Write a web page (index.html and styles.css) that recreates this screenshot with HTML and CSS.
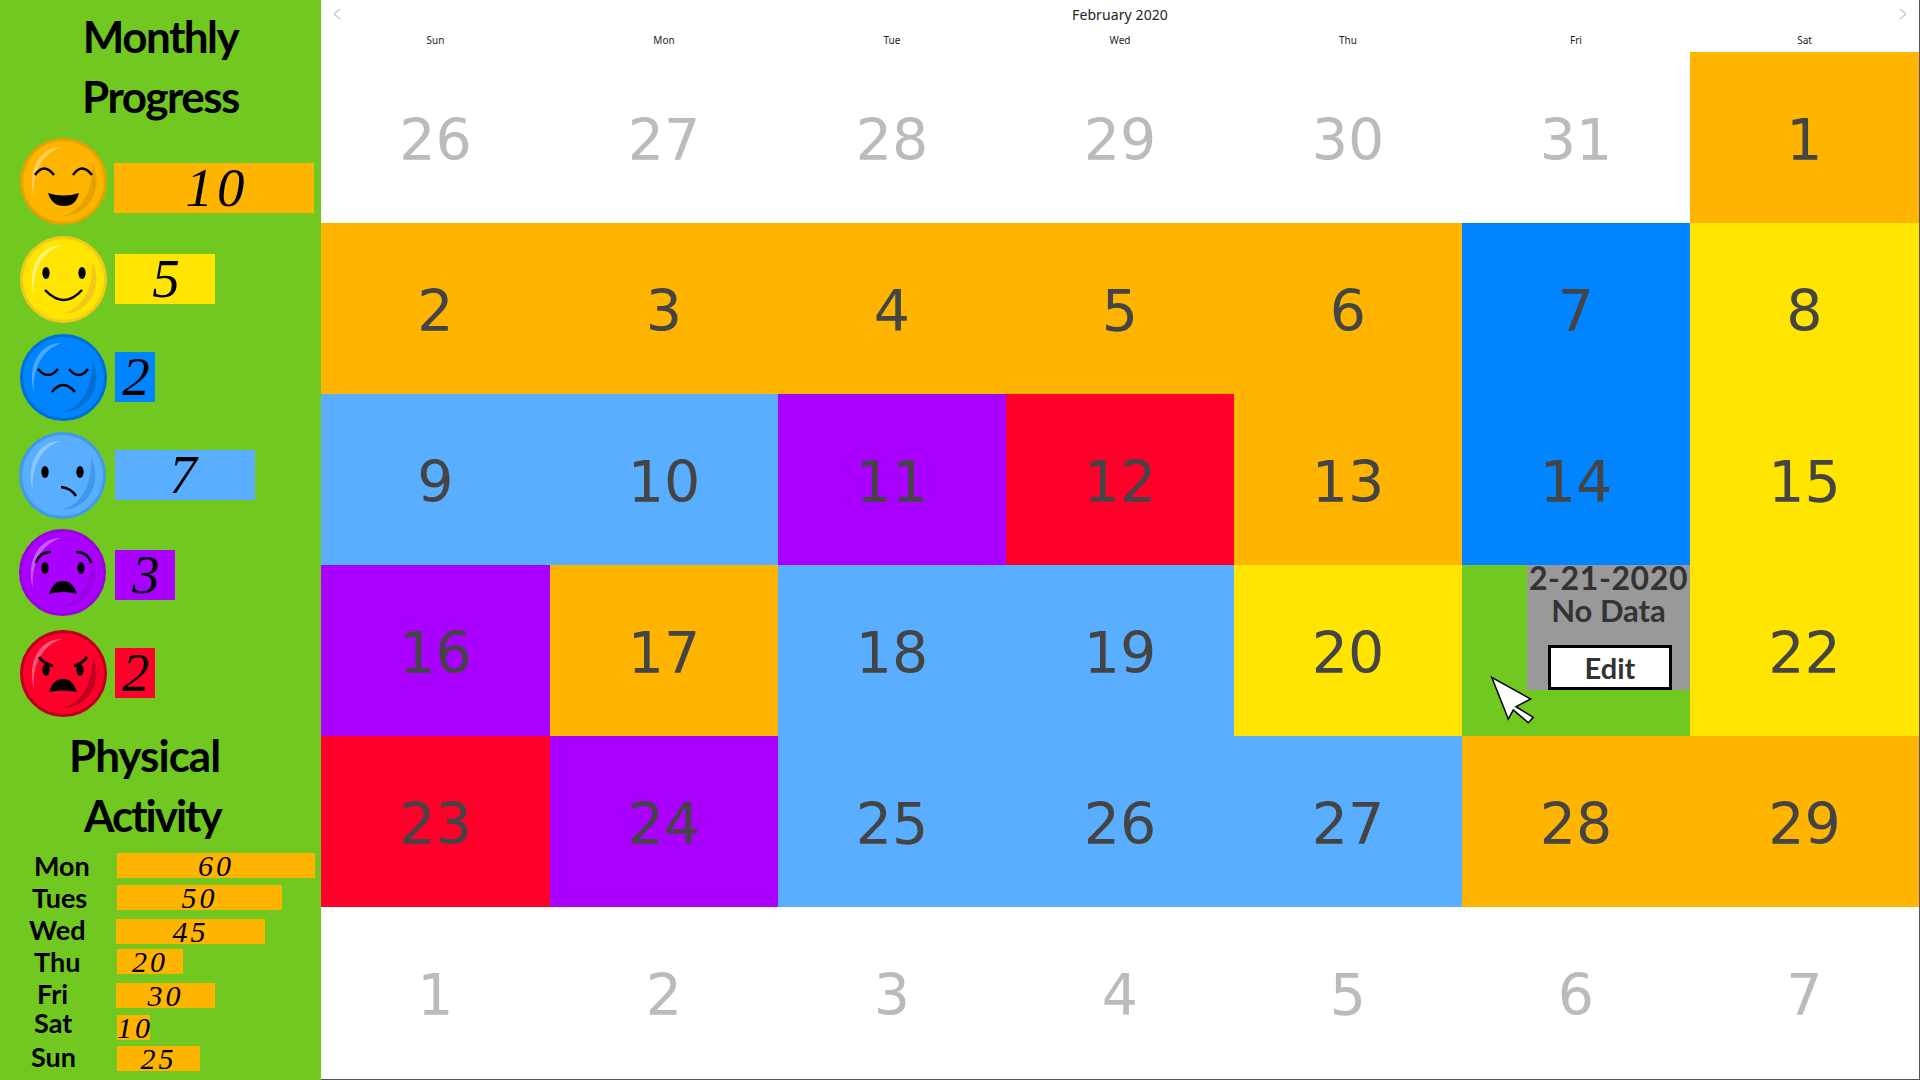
FILE: index.html
```html
<!DOCTYPE html>
<html>
<head>
  <title>Monthly Progress</title>
  <link rel="stylesheet" href="styles.css">
</head>
<body>
<div class="app">
  <aside class="sidebar">
    <h2 class="title title-monthly">Monthly<br>Progress</h2>

    <div class="mood-list">
      <div class="mood-row row-1">
        <svg class="face" viewBox="0 0 87 87">
          <circle cx="43.5" cy="43.5" r="42" fill="#ffb400" stroke="#e6a200" stroke-width="3"/>
          <path d="M72 25C84 50 70 78 42 78C60 74 74 55 72 25z" fill="#e6a200"/>
          <path d="M42 9C22 8 6 30 14 59C12 35 22 15 42 9z" fill="#fff" opacity=".35"/>
          <path d="M15 37Q24 24 34 37M53 37Q62 24 72 37" fill="none" stroke="#000" stroke-width="2.5"/>
          <path d="M28 55Q44 60 59 55Q56 68 44 68Q32 68 28 55z"/>
        </svg>
        <div class="mood-bar bar-orange w-10">10</div>
      </div>
      <div class="mood-row row-2">
        <svg class="face" viewBox="0 0 87 87">
          <circle cx="43.5" cy="43.5" r="42" fill="#ffe500" stroke="#f2c91a" stroke-width="3"/>
          <path d="M72 25C84 50 70 78 42 78C60 74 74 55 72 25z" fill="#f2c91a"/>
          <path d="M42 9C22 8 6 30 14 59C12 35 22 15 42 9z" fill="#fff" opacity=".45"/>
          <ellipse cx="26" cy="37" rx="3.7" ry="6"/>
          <ellipse cx="62" cy="37" rx="3.7" ry="6"/>
          <path d="M25 54Q44 74 62 54" fill="none" stroke="#000" stroke-width="2.5"/>
        </svg>
        <div class="mood-bar bar-yellow w-5">5</div>
      </div>
      <div class="mood-row row-3">
        <svg class="face" viewBox="0 0 87 87">
          <circle cx="43.5" cy="43.5" r="42" fill="#0084ff" stroke="#0070d9" stroke-width="3"/>
          <path d="M72 25C84 50 70 78 42 78C60 74 74 55 72 25z" fill="#0070d0"/>
          <path d="M42 9C22 8 6 30 14 59C12 35 22 15 42 9z" fill="#fff" opacity=".3"/>
          <path d="M18 35Q28 47 38 35M49 35Q59 47 68 35M32 58Q43 44 55 58" fill="none" stroke="#000" stroke-width="2.5"/>
        </svg>
        <div class="mood-bar bar-blue w-2">2</div>
      </div>
      <div class="mood-row row-4">
        <svg class="face" viewBox="0 0 87 87">
          <circle cx="43.5" cy="43.5" r="42" fill="#5aaeff" stroke="#3e9aed" stroke-width="3"/>
          <path d="M72 25C84 50 70 78 42 78C60 74 74 55 72 25z" fill="#3e9aed"/>
          <path d="M42 9C22 8 6 30 14 59C12 35 22 15 42 9z" fill="#fff" opacity=".3"/>
          <ellipse cx="26" cy="40" rx="3.7" ry="6"/>
          <ellipse cx="61" cy="40" rx="3.7" ry="6"/>
          <path d="M42 55Q52 56 57 64" fill="none" stroke="#000" stroke-width="2.5"/>
        </svg>
        <div class="mood-bar bar-light w-7">7</div>
      </div>
      <div class="mood-row row-5">
        <svg class="face" viewBox="0 0 87 87">
          <circle cx="43.5" cy="43.5" r="42" fill="#aa00ff" stroke="#9a00e6" stroke-width="3"/>
          <path d="M72 25C84 50 70 78 42 78C60 74 74 55 72 25z" fill="#9a00e6"/>
          <path d="M42 9C22 8 6 30 14 59C12 35 22 15 42 9z" fill="#fff" opacity=".35"/>
          <ellipse cx="26" cy="39" rx="3.7" ry="6"/>
          <ellipse cx="62" cy="39" rx="3.7" ry="6"/>
          <path d="M17 34Q20 23 32 23M72 34Q69 23 57 23" fill="none" stroke="#000" stroke-width="2.5"/>
          <path d="M30 65Q34 52 44 52Q54 52 58 65Q44 61 30 65z"/>
        </svg>
        <div class="mood-bar bar-purple w-3">3</div>
      </div>
      <div class="mood-row row-6">
        <svg class="face" viewBox="0 0 87 87">
          <circle cx="43.5" cy="43.5" r="42" fill="#ff002b" stroke="#bd0020" stroke-width="3"/>
          <path d="M72 25C84 50 70 78 42 78C60 74 74 55 72 25z" fill="#bd0020"/>
          <path d="M42 9C22 8 6 30 14 59C12 35 22 15 42 9z" fill="#fff" opacity=".35"/>
          <ellipse cx="26" cy="40" rx="3.7" ry="6"/>
          <ellipse cx="60" cy="40" rx="3.7" ry="6"/>
          <path d="M19 27Q23 33 33 36M67 27Q63 33 54 36" fill="none" stroke="#000" stroke-width="3"/>
          <path d="M29 62Q33 49 43 49Q53 49 57 62Q43 59 29 62z"/>
        </svg>
        <div class="mood-bar bar-red w-2">2</div>
      </div>
    </div>

    <h2 class="title title-activity"><span class="line-physical">Physical</span><br><span class="line-activity">Activity</span></h2>

    <div class="activity-list">
      <div class="activity-row day-mon"><span class="day-name">Mon</span><div class="activity-bar m-60">60</div></div>
      <div class="activity-row day-tue"><span class="day-name">Tues</span><div class="activity-bar m-50">50</div></div>
      <div class="activity-row day-wed"><span class="day-name">Wed</span><div class="activity-bar m-45">45</div></div>
      <div class="activity-row day-thu"><span class="day-name">Thu</span><div class="activity-bar m-20">20</div></div>
      <div class="activity-row day-fri"><span class="day-name">Fri</span><div class="activity-bar m-30">30</div></div>
      <div class="activity-row day-sat"><span class="day-name">Sat</span><div class="activity-bar m-10">10</div></div>
      <div class="activity-row day-sun"><span class="day-name">Sun</span><div class="activity-bar m-25">25</div></div>
    </div>
  </aside>

  <main class="calendar">
    <div class="cal-header">
      <svg class="chevron" viewBox="0 0 8 12"><path d="M7 1L1 6L7 11" fill="none" stroke="#aaa"/></svg>
      <span class="month-name">February 2020</span>
      <svg class="chevron" viewBox="0 0 8 12"><path d="M1 1L7 6L1 11" fill="none" stroke="#aaa"/></svg>
    </div>
    <div class="week-names">
      <span>Sun</span><span>Mon</span><span>Tue</span><span>Wed</span><span>Thu</span><span>Fri</span><span>Sat</span>
    </div>
    <div class="cal-grid">
      <div class="cell muted">26</div>
      <div class="cell muted">27</div>
      <div class="cell muted">28</div>
      <div class="cell muted">29</div>
      <div class="cell muted">30</div>
      <div class="cell muted">31</div>
      <div class="cell orange">1</div>

      <div class="cell orange">2</div>
      <div class="cell orange">3</div>
      <div class="cell orange">4</div>
      <div class="cell orange">5</div>
      <div class="cell orange">6</div>
      <div class="cell blue">7</div>
      <div class="cell yellow">8</div>

      <div class="cell light">9</div>
      <div class="cell light">10</div>
      <div class="cell purple">11</div>
      <div class="cell red">12</div>
      <div class="cell orange">13</div>
      <div class="cell blue">14</div>
      <div class="cell yellow">15</div>

      <div class="cell purple">16</div>
      <div class="cell orange">17</div>
      <div class="cell light">18</div>
      <div class="cell light">19</div>
      <div class="cell yellow">20</div>
      <div class="cell popup-cell">
        <div class="popup">
          <div class="popup-date">2-21-2020</div>
          <div class="popup-note">No Data</div>
          <button class="edit-btn">Edit</button>
        </div>
        <svg class="cursor" viewBox="0 0 46 50"><path d="M1.7 2.3L40.7 24L26 31.7L43.3 42.3L38.3 47.7L23.3 35L18.3 44z" fill="#fff" stroke="#000" stroke-width="1.5"/></svg>
      </div>
      <div class="cell yellow">22</div>

      <div class="cell red">23</div>
      <div class="cell purple">24</div>
      <div class="cell light">25</div>
      <div class="cell light">26</div>
      <div class="cell light">27</div>
      <div class="cell orange">28</div>
      <div class="cell orange">29</div>

      <div class="cell muted">1</div>
      <div class="cell muted">2</div>
      <div class="cell muted">3</div>
      <div class="cell muted">4</div>
      <div class="cell muted">5</div>
      <div class="cell muted">6</div>
      <div class="cell muted">7</div>
    </div>
  </main>
</div>
</body>
</html>
```

FILE: styles.css
```css
html, body {
  margin: 0;
  height: 100%;
  overflow: hidden;
  background: #fff;
}

.app {
  display: flex;
  height: 1080px;
}

/* left column */
.sidebar {
  width: 321px;
  flex: none;
  background: #70c820;
  color: #000;
  font-family: "Lato", "Noto Sans", sans-serif;
}

.title {
  margin: 0;
  font-size: 44px;
  font-weight: 700;
  line-height: 60px;
  letter-spacing: -1.5px;
}

.title-monthly {
  width: 321px;
  padding-top: 6px;
  text-align: center;
}

.mood-list {
  margin-top: 12px;
  padding-left: 20px;
}

.mood-row {
  display: flex;
  align-items: flex-start;
  height: 87px;
  margin-top: 11px;
}

.mood-row.row-1 { margin-top: 0; }
.mood-row.row-4 { margin-top: 11px; margin-left: -1px; }
.mood-row.row-5 { margin-top: 10px; margin-left: -1px; }
.mood-row.row-6 { margin-top: 14px; }

.face {
  width: 87px;
  height: 87px;
  flex: none;
}

.mood-bar {
  box-sizing: border-box;
  height: 50px;
  margin-left: 8px;
  margin-top: 18px;
  padding-left: 6px;
  text-align: center;
  font-family: "Liberation Serif", serif;
  font-style: italic;
  font-size: 55px;
  line-height: 50px;
  letter-spacing: 4px;
}

.row-1 .mood-bar { margin-top: 25px; margin-left: 7px; }
.row-4 .mood-bar, .row-5 .mood-bar { margin-left: 9px; }
.row-5 .mood-bar { margin-top: 21px; }
.row-4 .mood-bar { padding-left: 0; }

.bar-orange { background: #ffb400; }
.bar-yellow { background: #ffe500; }
.bar-blue { background: #0084ff; }
.bar-light { background: #5aaeff; }
.bar-purple { background: #aa00ff; }
.bar-red { background: #ff002b; }

.w-10 { width: 200px; }
.w-7 { width: 140px; }
.w-5 { width: 100px; }
.w-3 { width: 60px; }
.w-2 { width: 40px; }

.title-activity {
  margin-top: 8px;
}

.line-physical { margin-left: 69px; letter-spacing: -1px; }
.line-activity { margin-left: 84px; letter-spacing: -2px; }

.activity-list {
  display: flex;
  flex-direction: column;
  margin-top: 8px;
}

.activity-row {
  display: flex;
  align-items: center;
  height: 25px;
}

.day-tue { margin-top: 7px; }
.day-wed { margin-top: 9px; }
.day-thu { margin-top: 5px; }
.day-fri { margin-top: 9px; }
.day-sat { margin-top: 7px; }
.day-sun { margin-top: 6px; }

.day-name {
  width: 117px;
  flex: none;
  box-sizing: border-box;
  padding-left: 34px;
  font-size: 27px;
  font-weight: 700;
  line-height: 25px;
}

.day-tue .day-name { padding-left: 32px; }
.day-wed .day-name { padding-left: 29px; padding-bottom: 5px; width: 116px; }
.day-fri .day-name { padding-left: 37px; padding-bottom: 5px; width: 116px; }
.day-sat .day-name { padding-bottom: 10px; }
.day-sun .day-name { padding-left: 31px; padding-bottom: 5px; }

.activity-bar {
  height: 25px;
  background: #ffb400;
  text-align: center;
  font-family: "Liberation Serif", serif;
  font-style: italic;
  font-size: 30px;
  line-height: 26px;
  letter-spacing: 3px;
}

.m-60 { width: 198px; }
.m-50 { width: 165px; }
.m-45 { width: 149px; }
.m-30 { width: 99px; }
.m-25 { width: 83px; }
.m-20 { width: 66px; }
.m-10 { width: 33px; white-space: nowrap; }

/* calendar */
.calendar {
  flex: 1;
  display: flex;
  flex-direction: column;
  min-width: 0;
  font-family: "Noto Sans", sans-serif;
  border-right: 1px solid #555;
  border-bottom: 1px solid #555;
}

.cal-header {
  height: 30px;
  display: flex;
  align-items: center;
  justify-content: space-between;
  padding: 0 12px 2px 12px;
  box-sizing: border-box;
}

.chevron {
  width: 8px;
  height: 12px;
}

.month-name {
  font-size: 14px;
  letter-spacing: .1px;
  color: #222;
}

.week-names {
  height: 22px;
  display: grid;
  grid-template-columns: 229px repeat(5, 228px) 1fr;
  text-align: center;
  font-size: 10px;
  line-height: 20px;
  color: #222;
}

.cal-grid {
  display: grid;
  grid-template-columns: 229px repeat(5, 228px) 1fr;
  grid-auto-rows: 171px;
}

.cell {
  box-sizing: border-box;
  padding-top: 5px;
  display: flex;
  align-items: center;
  justify-content: center;
  font-family: "DejaVu Sans", sans-serif;
  font-size: 57px;
  color: #444;
}

.muted { color: #bbb; }
.orange { background: #ffb400; }
.yellow { background: #ffe500; }
.blue { background: #0084ff; }
.light { background: #5aaeff; }
.purple { background: #aa00ff; }
.red { background: #ff002b; }

/* hovered day */
.popup-cell {
  position: relative;
  padding-top: 0;
  align-items: flex-start;
  justify-content: flex-end;
  background: #70c820;
}

.popup {
  width: 163px;
  height: 125px;
  background: #999;
  color: #333;
  font-family: "Lato", "Noto Sans", sans-serif;
  font-weight: 700;
  text-align: center;
}

.popup-date {
  font-size: 32px;
  line-height: 26px;
  letter-spacing: .6px;
  white-space: nowrap;
}

.popup-note {
  font-size: 31px;
  line-height: 38px;
}

.edit-btn {
  display: block;
  width: 124px;
  height: 45px;
  margin: 16px 0 0 21px;
  padding: 0;
  background: #fff;
  border: 3px solid #000;
  border-radius: 0;
  color: #333;
  font-family: "Lato", "Noto Sans", sans-serif;
  font-weight: 700;
  font-size: 29px;
}

.cursor {
  position: absolute;
  left: 28px;
  top: 110px;
  width: 46px;
  height: 50px;
}
```
